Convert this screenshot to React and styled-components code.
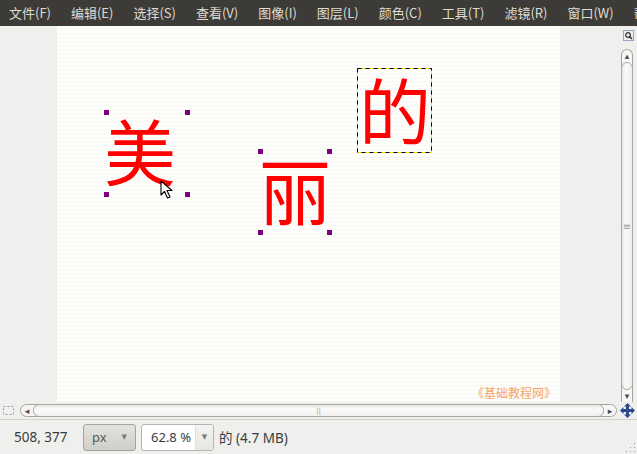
import React from "react";
import styled, { createGlobalStyle } from "styled-components";

const Global = createGlobalStyle`
  html, body { margin: 0; padding: 0; overflow: hidden; }
  body { background: #eff0ed; }
`;

const menus = ["文件(F)", "编辑(E)", "选择(S)", "查看(V)", "图像(I)", "图层(L)", "颜色(C)", "工具(T)", "滤镜(R)", "窗口(W)", "帮助(H)"];

const App = () => {
  return (
    <Window>
      <Global />
      <MenuBar>
        {menus.map((m) => (
          <MenuItem key={m}>{m}</MenuItem>
        ))}
      </MenuBar>
      <Workspace>
        <View>
          <Canvas>
            <Glyph style={{ left: 47, top: 87 }}>美</Glyph>
            <Glyph style={{ left: 202, top: 126 }}>丽</Glyph>
            <Glyph style={{ left: 302, top: 46 }}>的</Glyph>
            <Handle $x={47} $y={84} />
            <Handle $x={128} $y={84} />
            <Handle $x={47} $y={166} />
            <Handle $x={128} $y={166} />
            <Handle $x={201} $y={123} />
            <Handle $x={270} $y={123} />
            <Handle $x={201} $y={204} />
            <Handle $x={270} $y={204} />
            <Selection width="75" height="85" viewBox="0 0 75 85">
              <rect x="0.5" y="0.5" width="74" height="84" fill="none" stroke="#f2e600" />
              <rect x="0.5" y="0.5" width="74" height="84" fill="none" stroke="#000" strokeDasharray="4 4" />
            </Selection>
            <Cursor width="14" height="20" viewBox="0 0 14 20">
              <path d="M1 1 L1 15 L4.5 11.5 L7.5 18 L10 17 L7 10.5 L12 10.5 Z" fill="#fff" stroke="#000" strokeWidth="1.1" strokeLinejoin="round" />
            </Cursor>
            <Watermark>《基础教程网》</Watermark>
          </Canvas>
        </View>
        <VColumn>
          <NavIcon width="11" height="11" viewBox="0 0 11 11">
            <rect x="0.5" y="0.5" width="10" height="10" fill="none" stroke="#3a58a0" strokeDasharray="1 1" />
            <circle cx="5" cy="5" r="2.3" fill="none" stroke="#333" strokeWidth="1.3" />
            <path d="M6.6 6.6 L9 9" stroke="#333" strokeWidth="1.6" />
          </NavIcon>
          <VTrough>
            <Arrow>▴</Arrow>
            <VThumb>
              <Grip $vertical>≡</Grip>
            </VThumb>
            <Arrow>▾</Arrow>
          </VTrough>
        </VColumn>
        <HRow>
          <CornerIcon width="11" height="9" viewBox="0 0 11 9">
            <rect x="0.5" y="0.5" width="10" height="8" fill="none" stroke="#9a9a96" strokeDasharray="2 2" />
          </CornerIcon>
          <HTrough>
            <Arrow>◂</Arrow>
            <HThumb>
              <Grip>||</Grip>
            </HThumb>
            <Arrow>▸</Arrow>
          </HTrough>
        </HRow>
        <MoveCell>
          <svg width="15" height="15" viewBox="0 0 15 15">
            <path
              d="M7.5 0 L11 3.5 L9 3.5 L9 6 L11.5 6 L11.5 4 L15 7.5 L11.5 11 L11.5 9 L9 9 L9 11.5 L11 11.5 L7.5 15 L4 11.5 L6 11.5 L6 9 L3.5 9 L3.5 11 L0 7.5 L3.5 4 L3.5 6 L6 6 L6 3.5 L4 3.5 Z"
              fill="#2b4a8c"
            />
          </svg>
        </MoveCell>
      </Workspace>
      <StatusBar>
        <Coords>508, 377</Coords>
        <UnitCombo>
          <span>px</span>
          <SmallArrow>▼</SmallArrow>
        </UnitCombo>
        <ZoomBox>
          <ZoomValue>62.8 %</ZoomValue>
          <ZoomButton>
            <SmallArrow>▼</SmallArrow>
          </ZoomButton>
        </ZoomBox>
        <StatusText>的 (4.7 MB)</StatusText>
        <ResizeGrip width="12" height="12" viewBox="0 0 12 12">
          {[
            [10, 2],
            [10, 6],
            [6, 6],
            [10, 10],
            [6, 10],
            [2, 10],
          ].map(([x, y]) => (
            <rect key={`${x}-${y}`} x={x} y={y} width="1" height="1" fill="#9b9b97" />
          ))}
        </ResizeGrip>
      </StatusBar>
    </Window>
  );
};

export default App;

const Window = styled.div`
  width: 637px;
  height: 454px;
  display: flex;
  flex-direction: column;
  background: #eff0ed;
  font-family: "Noto Sans", "Noto Sans CJK SC", sans-serif;
  overflow: hidden;
`;

const MenuBar = styled.div`
  height: 26px;
  flex: none;
  display: flex;
  align-items: center;
  background: #3c3b37;
  padding-left: 0;
  white-space: nowrap;
  overflow: hidden;
`;

const MenuItem = styled.div`
  flex: none;
  padding: 0 10px;
  color: #dfdbd2;
  font-family: "Noto Sans CJK SC", "Noto Sans", sans-serif;
  font-size: 13px;
  line-height: 26px;
  &:first-child {
    padding-left: 9px;
  }
`;

const Workspace = styled.div`
  height: 393px;
  flex: none;
  display: grid;
  grid-template-columns: 619px 18px;
  grid-template-rows: 376px 17px;
  border-bottom: 1px solid #d3d4d0;
`;

const View = styled.div`
  padding-left: 57px;
  overflow: hidden;
`;

const Canvas = styled.div`
  position: relative;
  width: 503px;
  height: 376px;
  background: #fdfdfb repeating-linear-gradient(to bottom, #fdfdfb 0 3px, #f7f8f3 3px 4px);
`;

const Glyph = styled.span`
  position: absolute;
  width: 72px;
  height: 72px;
  font-family: "Noto Sans CJK SC", sans-serif;
  font-size: 72px;
  line-height: 72px;
  color: #ff0000;
`;

const Handle = styled.div`
  position: absolute;
  left: ${(p) => p.$x}px;
  top: ${(p) => p.$y}px;
  width: 5px;
  height: 5px;
  background: #7d0080;
`;

const Selection = styled.svg`
  position: absolute;
  left: 300px;
  top: 42px;
`;

const Cursor = styled.svg`
  position: absolute;
  left: 103px;
  top: 154px;
`;

const Watermark = styled.div`
  position: absolute;
  right: 4px;
  bottom: 2px;
  font-family: "Noto Sans CJK SC", sans-serif;
  font-size: 12px;
  line-height: 14px;
  color: #f6a466;
`;

const VColumn = styled.div`
  display: flex;
  flex-direction: column;
  align-items: flex-start;
  padding: 4px 0 0 2px;
`;

const NavIcon = styled.svg`
  margin-left: 2px;
  flex: none;
`;

const VTrough = styled.div`
  margin-top: 8px;
  width: 12px;
  flex: 1;
  display: flex;
  flex-direction: column;
  align-items: center;
  border: 1px solid #a3a3a0;
  border-bottom: none;
  border-radius: 7px 7px 0 0;
  background: #f7f6f4;
  box-sizing: border-box;
`;

const Arrow = styled.div`
  flex: none;
  width: 12px;
  height: 12px;
  display: flex;
  align-items: center;
  justify-content: center;
  font-size: 9px;
  color: #4a4a48;
  font-family: "DejaVu Sans", sans-serif;
`;

const VThumb = styled.div`
  flex: 1;
  width: 12px;
  box-sizing: border-box;
  border: 1px solid #a9a8a5;
  border-radius: 6px;
  background: linear-gradient(to right, #e9e7e5, #fbfafa 40%, #f1efed);
  display: flex;
  align-items: center;
  justify-content: center;
`;

const Grip = styled.span`
  font-size: ${(p) => (p.$vertical ? "10px" : "7px")};
  color: #a2a19e;
  letter-spacing: ${(p) => (p.$vertical ? "0" : "0")};
  font-family: "DejaVu Sans", sans-serif;
`;

const HRow = styled.div`
  display: flex;
  align-items: center;
  padding-left: 3px;
  gap: 6px;
`;

const CornerIcon = styled.svg`
  flex: none;
`;

const HTrough = styled.div`
  flex: 1;
  height: 13px;
  display: flex;
  align-items: center;
  border: 1px solid #a3a3a0;
  border-radius: 7px;
  background: #f7f6f4;
  box-sizing: border-box;
  margin-right: 2px;
`;

const HThumb = styled.div`
  flex: 1;
  height: 13px;
  box-sizing: border-box;
  border: 1px solid #a9a8a5;
  border-radius: 6px;
  background: linear-gradient(to bottom, #e9e7e5, #fbfafa 40%, #f1efed);
  display: flex;
  align-items: center;
  justify-content: center;
`;

const MoveCell = styled.div`
  display: flex;
  align-items: center;
  justify-content: center;
  padding-right: 1px;
`;

const StatusBar = styled.div`
  flex: 1;
  display: flex;
  align-items: center;
  padding-left: 14px;
  position: relative;
  color: #3c3c3c;
  font-size: 13.5px;
`;

const Coords = styled.span`
  width: 69px;
`;

const UnitCombo = styled.div`
  width: 53px;
  height: 27px;
  box-sizing: border-box;
  display: flex;
  align-items: center;
  justify-content: space-between;
  padding: 0 8px 0 8px;
  border: 1px solid #a4a39f;
  border-radius: 3px;
  background: linear-gradient(to bottom, #e3e2de, #cfcec9);
  color: #595957;
  font-size: 13px;
`;

const SmallArrow = styled.span`
  font-size: 7px;
  color: #7a7a77;
  font-family: "DejaVu Sans", sans-serif;
`;

const ZoomBox = styled.div`
  margin-left: 5px;
  width: 73px;
  height: 27px;
  box-sizing: border-box;
  display: flex;
  border: 1px solid #b4b3af;
  border-radius: 3px;
  background: #fff;
  overflow: hidden;
`;

const ZoomValue = styled.span`
  flex: 1;
  display: flex;
  align-items: center;
  justify-content: flex-end;
  padding-right: 4px;
  font-size: 13px;
  color: #3c3c3c;
`;

const ZoomButton = styled.span`
  width: 17px;
  display: flex;
  align-items: center;
  justify-content: center;
  border-left: 1px solid #e0dfdc;
  background: linear-gradient(to bottom, #f4f3f1, #e7e6e3);
`;

const StatusText = styled.span`
  margin-left: 5px;
  font-family: "Noto Sans", "Noto Sans CJK SC", sans-serif;
`;

const ResizeGrip = styled.svg`
  position: absolute;
  right: 1px;
  bottom: 1px;
`;
